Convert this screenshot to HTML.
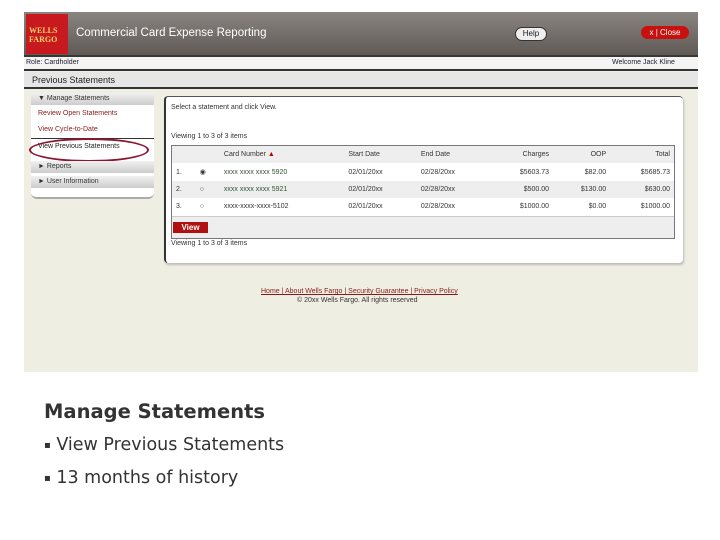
<!DOCTYPE html>
<html><head><style>
body{margin:0;width:720px;height:540px;background:#fff;position:relative;font-family:"Liberation Sans",sans-serif;overflow:hidden}
.a{position:absolute}
.shot{left:24px;top:12px;width:674px;height:360px;background:#efeee2;overflow:hidden}
.t{font-size:7px;color:#333;white-space:nowrap}
td{font-size:7px;color:#333;padding:0 4px;white-space:nowrap}
.b{font-family:"DejaVu Sans",sans-serif;color:#333;white-space:nowrap}
.bl{font-size:10px;vertical-align:2px}
</style></head><body>
<div class="a shot">
 <div class="a" style="left:0;top:0;width:674px;height:43px;background:linear-gradient(#8a8581,#5f5a56);border-bottom:2px solid #3a3633"></div>
 <div class="a" style="left:2px;top:2px;width:42px;height:40px;background:#c8191f"></div>
 <div class="a" style="left:5px;top:14px;font:bold 8px 'Liberation Serif',serif;color:#f3d36a;line-height:9px">WELLS<br>FARGO</div>
 <div class="a" style="left:52px;top:15px;font-size:11.5px;color:#fff">Commercial Card Expense Reporting</div>
 <div class="a" style="left:491px;top:15px;width:30px;height:12px;border-radius:7px;background:#eee;border:1px solid #333;font-size:8px;text-align:center;line-height:12px;color:#222">Help</div>
 <div class="a" style="left:617px;top:14px;width:48px;height:13px;border-radius:7px;background:#c8100f;font-size:8px;color:#fff;line-height:13px;text-align:center">x | Close</div>
 <div class="a" style="left:0;top:45px;width:674px;height:12px;background:#f4f4f4;border-bottom:2px solid #333"></div>
 <div class="a t" style="left:2px;top:47px;color:#223">Role: Cardholder</div>
 <div class="a t" style="left:588px;top:47px;color:#223">Welcome Jack Kline</div>
 <div class="a" style="left:0;top:60px;width:674px;height:15px;background:#e6e6e6;border-bottom:2px solid #333"></div>
 <div class="a" style="left:8px;top:63px;font-size:9px;color:#222">Previous Statements</div>
 <div class="a" style="left:7px;top:81px;width:123px;height:104px;background:#fff;border-radius:0 0 6px 6px;border-bottom:2px solid #aaa"></div>
 <div class="a" style="left:7px;top:81px;width:123px;height:12px;background:linear-gradient(#f0f0f0,#ccc)"></div>
 <div class="a t" style="left:14px;top:83px">▼ Manage Statements</div>
 <div class="a t" style="left:14px;top:98px;color:#8a1a1a">Review Open Statements</div>
 <div class="a t" style="left:14px;top:114px;color:#8a1a1a">View Cycle-to-Date</div>
 <div class="a" style="left:7px;top:126px;width:123px;height:1px;background:#333"></div>
 <div class="a t" style="left:14px;top:131px;color:#222">View Previous Statements</div>
 <div class="a" style="left:5px;top:126px;width:116px;height:20px;border:2px solid #8b1530;border-radius:50%"></div>
 <div class="a" style="left:7px;top:149px;width:123px;height:12px;background:linear-gradient(#f0f0f0,#ccc)"></div>
 <div class="a t" style="left:14px;top:151px">► Reports</div>
 <div class="a" style="left:7px;top:164px;width:123px;height:12px;background:linear-gradient(#f0f0f0,#ccc)"></div>
 <div class="a t" style="left:14px;top:166px">► User Information</div>
 <div class="a" style="left:140px;top:84px;width:517px;height:166px;background:#fff;border-left:2px solid #333;border-top:1px solid #555;border-radius:4px;box-shadow:1px 2px 2px #bbb"></div>
 <div class="a t" style="left:147px;top:92px">Select a statement and click View.</div>
 <div class="a t" style="left:147px;top:121px">Viewing 1 to 3 of 3 items</div>
 <div class="a" style="left:147px;top:133px;width:502px;height:92px;border:1px solid #777;background:#fff"></div>
 <table class="a" style="left:148px;top:134px;width:502px;border-collapse:collapse">
  <tr style="height:17px;background:#eee"><td></td><td></td><td>Card Number <span style="color:#b00">▲</span></td><td>Start Date</td><td>End Date</td><td align=right>Charges</td><td align=right>OOP</td><td align=right>Total</td></tr>
  <tr style="height:18px"><td>1.</td><td>◉</td><td style="color:#353">xxxx xxxx xxxx 5920</td><td>02/01/20xx</td><td>02/28/20xx</td><td align=right>$5603.73</td><td align=right>$82.00</td><td align=right>$5685.73</td></tr>
  <tr style="height:17px;background:#eee"><td>2.</td><td>○</td><td style="color:#353">xxxx xxxx xxxx 5921</td><td>02/01/20xx</td><td>02/28/20xx</td><td align=right>$500.00</td><td align=right>$130.00</td><td align=right>$630.00</td></tr>
  <tr style="height:17px"><td>3.</td><td>○</td><td>xxxx-xxxx-xxxx-5102</td><td>02/01/20xx</td><td>02/28/20xx</td><td align=right>$1000.00</td><td align=right>$0.00</td><td align=right>$1000.00</td></tr>
 </table>
 <div class="a" style="left:148px;top:204px;width:502px;height:21px;background:#eee;border-top:1px solid #ccc"></div>
 <div class="a" style="left:149px;top:210px;width:35px;height:11px;background:#b01010;color:#fff;font-size:8px;font-weight:bold;text-align:center;line-height:11px">View</div>
 <div class="a t" style="left:147px;top:228px">Viewing 1 to 3 of 3 items</div>
 <div class="a t" style="left:237px;top:276px;color:#8a1a1a;text-decoration:underline">Home | About Wells Fargo | Security Guarantee | Privacy Policy</div>
 <div class="a t" style="left:273px;top:285px">© 20xx Wells Fargo. All rights reserved</div>
</div>
<div class="a b" style="left:44px;top:400px;font-size:19.5px;font-weight:bold">Manage Statements</div>
<div class="a b" style="left:44px;top:435px;font-size:17.5px"><span class="bl">▪</span> View Previous Statements</div>
<div class="a b" style="left:44px;top:468px;font-size:17.5px"><span class="bl">▪</span> 13 months of history</div>
</body></html>
